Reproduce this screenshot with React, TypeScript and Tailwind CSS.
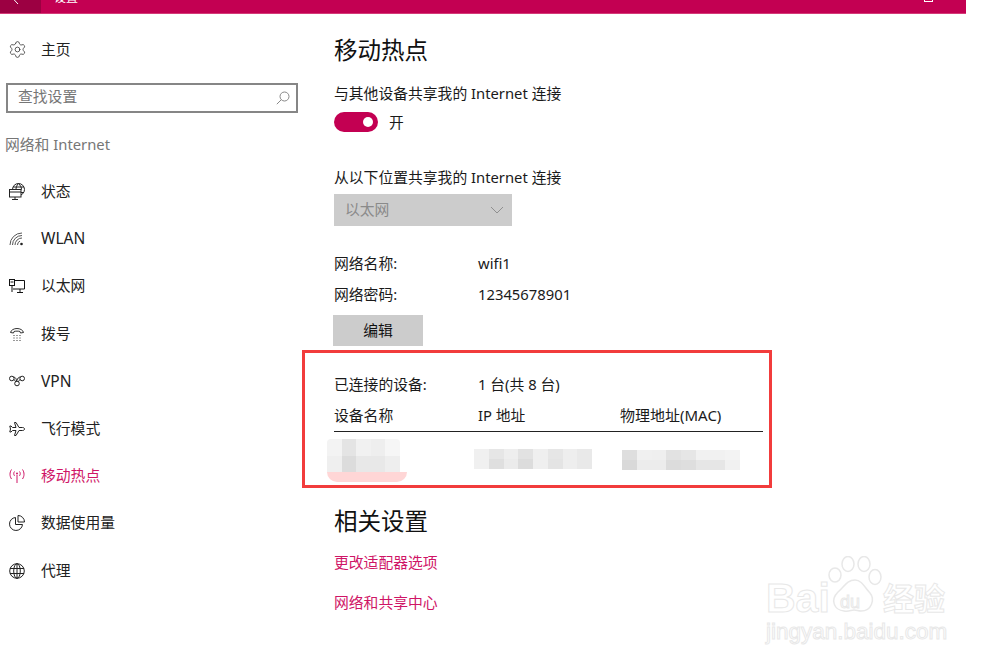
import React from 'react';
import { Settings } from 'lucide-react';

const font = { fontFamily: '"Noto Sans", "Noto Sans CJK SC", sans-serif' };

// icons, drawn on a 16x16 box
const Status = () => (
  <svg width="16" height="18" viewBox="0 0 16 18" fill="none" stroke="#222" strokeWidth="1">
    <circle cx="9.500" cy="6.500" r="6" />
    <path d="M9.500.5c-2 2-2.500 4-2.500 6M9.500.5c2 2 3 4 3 6M4 4h11M5 9.500h10" />
    <rect x="0.500" y="6.500" width="11.500" height="7.500" fill="#fff" />
    <path d="M0.500 9h11.500M6 14v2.500M3 16.500h6" />
  </svg>
);
const Wlan = () => (
  <svg width="16" height="16" viewBox="0 0 16 16" fill="none" stroke="#555" strokeWidth="1">
    <path d="M1 14A12 12 0 0 1 13 2M3.500 14A9.500 9.500 0 0 1 13 4.500M6 14A7 7 0 0 1 13 7M8.500 14A4.500 4.500 0 0 1 11 10" />
    <circle cx="12.500" cy="13" r="1.300" fill="#222" stroke="none" />
  </svg>
);
const Ethernet = () => (
  <svg width="16" height="16" viewBox="0 0 16 16" fill="none" stroke="#111" strokeWidth="1">
    <path d="M5.500 2.500h10v8.500H4M8 14.500h6M11 11v3.500" />
    <rect x="0.500" y="1.500" width="5" height="6" />
    <path d="M3 7.500V14M1.500 4h3" />
  </svg>
);
const Dial = () => (
  <svg width="16" height="16" viewBox="0 0 16 16" fill="none" stroke="#333" strokeWidth="1">
    <path d="M1.500 6.500C2 4 5 2.500 8 2.500s6 1.500 6.500 4l-3 .5-.5-1.500C10 5 6 5 5 5.500L4.500 7z" />
    <path d="M4.500 9.500h1M7.500 9.500h1M10.500 9.500h1M4.500 12h1M7.500 12h1M10.500 12h1M4.500 14.500h1M7.500 14.500h1M10.500 14.500h1" />
  </svg>
);
const Vpn = () => (
  <svg width="16" height="16" viewBox="0 0 16 16" fill="none" stroke="#222" strokeWidth="1">
    <circle cx="2.800" cy="5.500" r="2.300" />
    <circle cx="13.200" cy="5.500" r="2.300" />
    <path d="M4.500 4c2 0 2.800 2 3.200 4M11.500 4c-2 0-3 1.500-3.500 3.500" />
    <circle cx="8" cy="10.500" r="2.300" />
    <path d="M4.800 6.800c1.200.3 1.600 1 1.800 2M11.200 6.800c-1.200.3-1.600 1-1.800 2" />
  </svg>
);
const Plane = () => (
  <svg width="16" height="16" viewBox="0 0 16 16" fill="none" stroke="#222" strokeWidth="1">
    <path d="M15.500 8c0-1-1-1.500-2-1.500H10L7 1.500H5.500L7 6.500H3.500L2 5H.8l.7 3-.7 3H2l1.500-1.500H7l-1.500 5H7l3-5h3.500c1 0 2-.5 2-1.500z" />
  </svg>
);
const Hotspot = () => (
  <svg width="16" height="16" viewBox="0 0 16 16" fill="none" stroke="#cf1566" strokeWidth="1">
    <path d="M8 7v8" />
    <circle cx="8" cy="5.500" r="1" fill="#cf1566" stroke="none" />
    <path d="M5.500 3.500c-1 1.300-1 3 0 4.300M10.500 3.500c1 1.300 1 3 0 4.300M2.500 1.500c-2 3-2 6.500 0 9.500M13.500 1.500c2 3 2 6.500 0 9.500" />
  </svg>
);
const Pie = () => (
  <svg width="16" height="16" viewBox="0 0 16 16" fill="none" stroke="#222" strokeWidth="1">
    <path d="M6.500 2.500a6.500 6.500 0 1 0 7 7h-7z" />
    <path d="M9 .5a6.500 6.500 0 0 1 6.500 6.500H9z" />
  </svg>
);
const Globe = () => (
  <svg width="16" height="16" viewBox="0 0 16 16" fill="none" stroke="#222" strokeWidth="1">
    <circle cx="8" cy="8" r="7.300" />
    <ellipse cx="8" cy="8" rx="3.300" ry="7.300" />
    <path d="M1 5.500h14M1 10.500h14M8 .7v14.600" />
  </svg>
);

const navItems = [
  { label: '状态', icon: <Status /> },
  { label: 'WLAN', icon: <Wlan />, wide: true },
  { label: '以太网', icon: <Ethernet /> },
  { label: '拨号', icon: <Dial /> },
  { label: 'VPN', icon: <Vpn />, wide: true },
  { label: '飞行模式', icon: <Plane /> },
  { label: '移动热点', icon: <Hotspot />, active: true },
  { label: '数据使用量', icon: <Pie /> },
  { label: '代理', icon: <Globe /> },
];

// pixelated blocks that hide the device name / ip / mac
const deviceTop = ['bg-[#f3f3f3]', 'bg-[#e4e4e4]', 'bg-[#f1f1f1]', 'bg-[#eeeeee]', 'bg-[#f6f6f6]'];
const deviceBottom = ['bg-[#efefef]', 'bg-[#dcdcdc]', 'bg-[#e8e8e8]', 'bg-[#e8e8e8]', 'bg-[#eeeeee]'];
const ipTop = ['bg-[#f0f0f0]', 'bg-[#e6e6e6]', 'bg-[#eeeeee]', 'bg-[#e2e2e2]', 'bg-[#efefef]', 'bg-[#e6e6e6]', 'bg-[#eeeeee]', 'bg-[#e9e9e9]'];
const ipBottom = ['bg-[#f0f0f0]', 'bg-[#dfdfdf]', 'bg-[#ebebeb]', 'bg-[#dcdcdc]', 'bg-[#efefef]', 'bg-[#e4e4e4]', 'bg-[#eeeeee]', 'bg-[#e9e9e9]'];
const macTop = ['bg-[#dedede]', 'bg-[#f0f0f0]', 'bg-[#efefef]', 'bg-[#e2e2e2]', 'bg-[#e6e6e6]', 'bg-[#f1f1f1]', 'bg-[#f1f1f1]', 'bg-[#f3f3f3]'];
const macBottom = ['bg-[#d9d9d9]', 'bg-[#ececec]', 'bg-[#ececec]', 'bg-[#dcdcdc]', 'bg-[#dedede]', 'bg-[#e6e6e6]', 'bg-[#e6e6e6]', 'bg-[#f1f1f1]'];

function Blocks({ rows, cell, className }: { rows: string[][]; cell: string; className?: string }) {
  return (
    <div className={className}>
      {rows.map((row, i) => (
        <div key={i} className="flex">
          {row.map((c, j) => (
            <div key={j} className={`${cell} ${c}`} />
          ))}
        </div>
      ))}
    </div>
  );
}

function Watermark() {
  const outline = 'text-white [-webkit-text-stroke:1px_#e8e8e8] [font-family:"Liberation_Sans",sans-serif] font-bold';
  return (
    <div className="absolute left-[766px] top-[556px] w-[182px] h-[92px]">
      <span className={`${outline} absolute left-0 top-[18px] text-[41px] leading-[48px]`}>Bai</span>
      <svg className="absolute left-[62px] top-0" width="54" height="60" viewBox="0 0 54 60" fill="#fff" stroke="#e8e8e8" strokeWidth="1.500">
        <ellipse cx="7" cy="19" rx="6" ry="7" />
        <ellipse cx="20" cy="8" rx="6" ry="7.500" />
        <ellipse cx="36" cy="8" rx="6" ry="7.500" />
        <ellipse cx="47" cy="21" rx="6" ry="7.500" />
        <path d="M27 24c7 0 10 8 15 13 5 6 2 18-9 18-3 0-4-1-7-1s-5 2-10 1C6 54 2 44 10 36c6-5 9-12 17-12z" />
      </svg>
      <span className={`${outline} absolute left-[74px] top-[36px] text-[18px] leading-[20px] font-normal`}>du</span>
      <span className="absolute left-[117px] top-[24px] text-[31px] leading-[36px] font-bold text-white [-webkit-text-stroke:1px_#e8e8e8]">经验</span>
      <span className={`${outline} absolute left-0 top-[62px] text-[22.500px] leading-[28px] font-normal whitespace-nowrap`}>jingyan.baidu.com</span>
    </div>
  );
}

export default function App() {
  return (
    <div style={font} className="relative w-[1000px] h-[664px] bg-white text-[14.800px] text-[#1a1a1a] overflow-hidden">
      {/* title bar, cut off by the screenshot */}
      <div className="flex w-[966px] h-[14px] bg-[#c30052] border-b border-[#d43a78] overflow-hidden text-white">
        <div className="w-[41px] h-full bg-[#9c0042] flex justify-center items-start">
          <svg width="12" height="13" viewBox="0 0 12 13" fill="none" stroke="#fff" strokeWidth="1" className="-mt-[9px] shrink-0 -ml-[8px]">
            <path d="M7 0 1 6.500l6 6.500M1 6.500h11" />
          </svg>
        </div>
        <div className="ml-[13px] h-full text-[12px] leading-[12px]">
          <span className="block -mt-[8px]">设置</span>
        </div>
        <div className="ml-auto mr-[33px] w-[9px] h-[2px] border-x border-b border-white" />
      </div>

      <div className="flex">
        {/* sidebar */}
        <div className="w-[302px] shrink-0">
          <div className="h-[47px] mt-[12px] flex items-center pl-[8px] gap-[14px]">
            <Settings size={19} strokeWidth={1} color="#333" />
            <span className="text-[#222]">主页</span>
          </div>
          <div className="mt-[10px] ml-[6px] w-[292px] h-[30px] border-2 border-[#868686] flex items-center justify-between pl-[10px] pr-[6px] text-[#767676]">
            <span className="pb-[4px]">查找设置</span>
            <svg width="14" height="14" viewBox="0 0 14 14" fill="none" stroke="#888" strokeWidth="1">
              <circle cx="8.500" cy="5.500" r="4.500" />
              <path d="M5.300 8.700.8 13.200" />
            </svg>
          </div>
          <div className="mt-[20px] pl-[5px] h-[22px] flex items-center text-[#767676]">网络和 Internet</div>
          <div className="mt-[13px] flex flex-col">
            {navItems.map((item) => (
              <div
                key={item.label}
                className={`h-[47.400px] flex items-center pl-[9px] gap-[16px] ${item.active ? 'text-[#cf1566]' : 'text-[#222]'}`}
              >
                <div className="w-[16px] h-[16px] flex items-center justify-center">{item.icon}</div>
                <span className={item.wide ? 'text-[15.500px]' : 'pb-[2px]'}>{item.label}</span>
              </div>
            ))}
          </div>
        </div>

        {/* content */}
        <div className="flex-1">
          <div className="pl-[32px]">
            <h1 className="mt-[20px] h-[34px] pb-[1px] flex items-center text-[23.500px] text-[#111]">移动热点</h1>
            <div className="mt-[14px] h-[22px] flex items-center">与其他设备共享我的 Internet 连接</div>
            <div className="mt-[8px] flex items-center h-[20px]">
              <div className="w-[44px] h-[20px] rounded-full bg-[#c30052] flex items-center justify-end pr-[5px]">
                <div className="w-[10px] h-[10px] rounded-full bg-white" />
              </div>
              <span className="ml-[11px]">开</span>
            </div>
            <div className="mt-[34px] h-[22px] flex items-center">从以下位置共享我的 Internet 连接</div>
            <div className="mt-[6px] w-[178px] h-[32px] pb-[1px] bg-[#cccccc] flex items-center justify-between pl-[11px] pr-[8px] text-[#8a8a8a]">
              <span className="pb-[1px]">以太网</span>
              <svg width="14" height="8" viewBox="0 0 14 8" fill="none" stroke="#8f8f8f" strokeWidth="1">
                <path d="m1 1 6 6 6-6" />
              </svg>
            </div>
            <div className="mt-[27px] h-[22px] pb-[2px] flex items-center">
              <span className="w-[144px]">网络名称:</span>
              <span>wifi1</span>
            </div>
            <div className="mt-[9px] h-[22px] pb-[2px] flex items-center">
              <span className="w-[144px]">网络密码:</span>
              <span>12345678901</span>
            </div>
            <div className="mt-[9px] -ml-[1px] w-[90px] h-[31px] bg-[#cccccc] flex items-center justify-center text-[#111]">编辑</div>
          </div>

          {/* red frame from the annotated screenshot */}
          <div className="mt-[4px] w-[470px] h-[138px] border-[3px] border-[#f23c3c] pl-[29px] pr-[6px] pt-[21px]">
            <div className="h-[22px] pb-[2px] flex items-center">
              <span className="w-[144px]">已连接的设备:</span>
              <span>1 台(共 8 台)</span>
            </div>
            <div className="mt-[8px] h-[22px] flex items-center">
              <span className="w-[144px]">设备名称</span>
              <span className="w-[142px]">IP 地址</span>
              <span className="text-[15px]">物理地址(MAC)</span>
            </div>
            <div className="mt-[5px] h-px bg-[#222]" />
            <div className="flex items-start">
              <div className="-ml-[7px] mt-[7px] w-[151px]">
                <Blocks rows={[deviceTop, deviceBottom]} cell="w-[14.600px] h-[16.500px]" className="rounded-t-sm overflow-hidden w-fit" />
                <div className="w-[80px] h-[10px] rounded-b-[10px] bg-[#ffd6d6]" />
              </div>
              <Blocks rows={[ipTop, ipBottom]} cell="w-[14.750px] h-[10px]" className="mt-[17px] -ml-[4px] w-[148px] [&>div]:w-[118px]" />
              <Blocks rows={[macTop, macBottom]} cell="w-[14.750px] h-[10px]" className="mt-[18px]" />
            </div>
          </div>

          <div className="pl-[32px]">
            <h2 className="mt-[17px] h-[34px] flex items-center text-[23.500px] text-[#111]">相关设置</h2>
            <div className="mt-[12px] h-[22px] flex items-center text-[#cf1566]">更改适配器选项</div>
            <div className="mt-[18px] h-[22px] flex items-center text-[#cf1566]">网络和共享中心</div>
          </div>
        </div>
      </div>

      <Watermark />
    </div>
  );
}
